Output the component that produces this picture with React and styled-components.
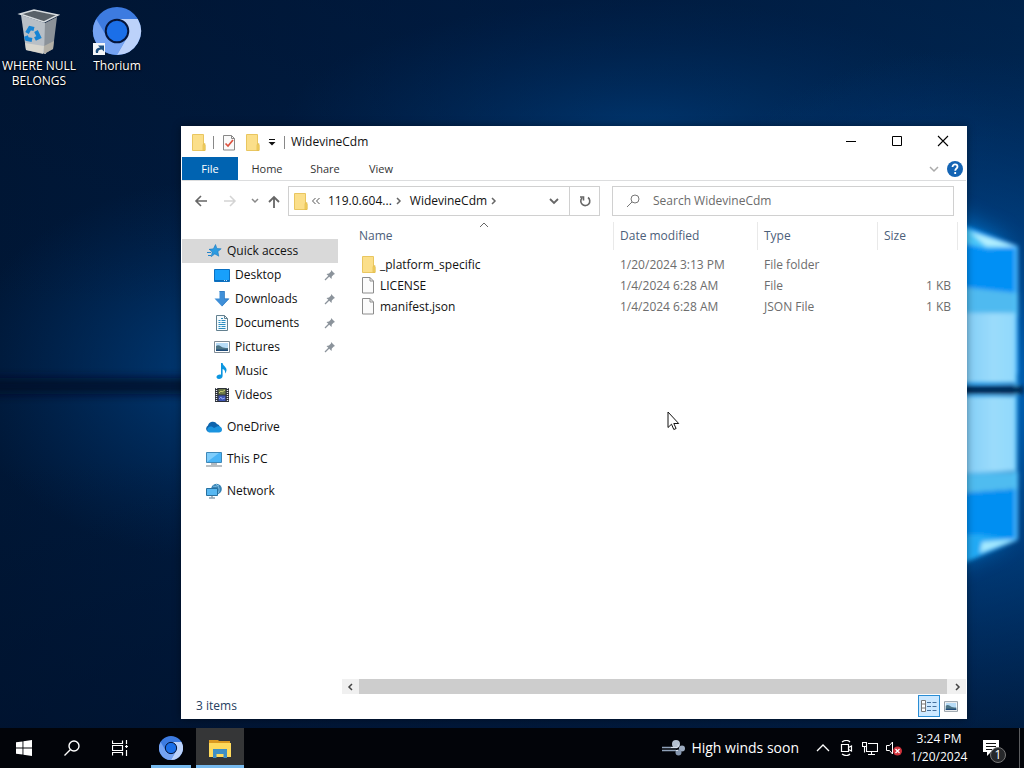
import React from "react";
import styled, { createGlobalStyle, css } from "styled-components";

const GlobalStyle = createGlobalStyle`
  * { box-sizing: border-box; }
  html, body { margin: 0; padding: 0; }
  body { font-family: "Open Sans", "Noto Sans", sans-serif; font-size: 12px; line-height: 16px; color: #111; background: #001a3a; overflow: hidden; }
  button, input { font: inherit; color: inherit; }
  svg { display: block; flex: none; }
  a { color: inherit; text-decoration: none; }
`;

const Desktop = styled.div`
  position: relative;
  height: 100vh;
  min-height: 480px;
  display: flex;
  flex-direction: column;
  overflow: hidden;
`;
const Wallpaper = styled.svg`
  position: absolute;
  inset: 0;
  width: 100%;
  height: 100%;
`;
const Shortcuts = styled.main`
  position: relative;
  flex: 1;
  min-height: 0;
  display: flex;
  align-items: flex-start;
  padding-top: 6px;
`;
const Shortcut = styled.a`
  width: 78px;
  display: flex;
  flex-direction: column;
  align-items: center;
  gap: 2px;
  color: #fff;
  line-height: 15px;
  text-align: center;
  text-shadow: 0 1px 2px #000, 0 0 2px #000;
`;

const Explorer = styled.section`
  position: absolute;
  left: 181px;
  right: 57px;
  top: 126px;
  bottom: 49px;
  display: flex;
  flex-direction: column;
  background: #fff;
  padding: 1px;
  box-shadow: 0 0 8px rgba(0, 0, 0, 0.4);
`;
const TitleBar = styled.header`
  height: 30px;
  display: flex;
  align-items: center;
`;
const QuickTools = styled.div`
  display: flex;
  align-items: center;
  gap: 7px;
  padding-left: 9px;
`;
const Bar = styled.span`
  width: 1px;
  height: 13px;
  background: #888;
`;
const Title = styled.h1`
  flex: 1;
  margin: 0 0 0 6px;
  font-size: 12px;
  font-weight: 400;
`;
const CaptionButton = styled.button`
  width: 46px;
  height: 30px;
  border: 0;
  padding: 0 0 2px;
  background: transparent;
  display: grid;
  place-items: center;
`;
const IconButton = styled.button`
  border: 0;
  padding: 0;
  background: transparent;
  display: grid;
  place-items: center;
  flex: none;
  width: ${(p) => p.$w || 16}px;
  height: ${(p) => p.$h || 16}px;
`;
const Ribbon = styled.nav`
  height: 24px;
  display: flex;
  align-items: center;
  border-bottom: 1px solid #dcddde;
  font-size: 11px;
  padding-right: 3px;
`;
const Tab = styled.button`
  height: 23px;
  border: 0;
  padding: 0;
  width: ${(p) => p.$w}px;
  background: ${(p) => (p.$primary ? "#0063b1" : "transparent")};
  color: ${(p) => (p.$primary ? "#fff" : "#333")};
`;
const Spacer = styled.span`
  flex: 1;
`;
const AddressRow = styled.div`
  display: grid;
  grid-template-columns: 96px 312fr 354fr;
  align-items: center;
  padding: 5px 12px 5px 10px;
`;
const NavButtons = styled.div`
  display: flex;
  align-items: center;
`;
const AddressBox = styled.div`
  min-width: 0;
  height: 30px;
  border: 1px solid #d0d0d0;
  display: flex;
  align-items: center;
`;
const Crumb = styled.button`
  border: 0;
  padding: 0 3px 0 7px;
  background: transparent;
  white-space: nowrap;
`;
const Refresh = styled(IconButton)`
  border-left: 1px solid #d0d0d0;
`;
const SearchBox = styled.label`
  min-width: 0;
  margin-left: 12px;
  height: 30px;
  border: 1px solid #d0d0d0;
  display: flex;
  align-items: center;
  gap: 13px;
  padding-left: 13px;
`;
const SearchInput = styled.input`
  flex: 1;
  min-width: 0;
  border: 0;
  padding: 0;
  outline: 0;
  background: transparent;
  &::placeholder { color: #6b6b6b; opacity: 1; }
`;
const Body = styled.div`
  flex: 1;
  min-height: 0;
  display: flex;
`;
const Sidebar = styled.nav`
  width: 156px;
  margin-right: 4px;
  padding-top: 18px;
  display: flex;
  flex-direction: column;
  gap: 8px;
`;
const Group = styled.div`
  display: flex;
  flex-direction: column;
`;
const NavItem = styled.a`
  height: 24px;
  display: flex;
  align-items: center;
  gap: 5px;
  padding-left: ${(p) => (p.$child ? 32 : 24)}px;
  padding-right: 2px;
  ${(p) => p.$selected && css`background: #d9d9d9;`}
`;
const Content = styled.div`
  flex: 1;
  min-width: 0;
  display: flex;
  flex-direction: column;
`;
const TableArea = styled.div`
  flex: 1;
  min-height: 0;
  padding: 1px 8px 0 10px;
`;
const FileTable = styled.table`
  width: 100%;
  table-layout: fixed;
  border-collapse: separate;
  border-spacing: 0;
`;
const Head = styled.th`
  width: ${(p) => (p.$w ? p.$w + "px" : "auto")};
  height: 28px;
  padding: 0 0 0 ${(p) => (p.$first ? 7 : 6)}px;
  border-right: 1px solid #e9e9e9;
  font-weight: 400;
  text-align: left;
  color: #4c607a;
`;
const HeadInner = styled.span`
  position: relative;
  display: block;
`;
const SortMark = styled.svg`
  position: absolute;
  top: -6px;
  left: 120px;
`;
const Cell = styled.td`
  height: 21px;
  padding: 0 7px 0 6px;
  color: #6d6d6d;
  text-align: ${(p) => (p.$right ? "right" : "left")};
`;
const GapRow = styled.tr`
  height: 4px;
`;
const FileLink = styled.a`
  display: flex;
  align-items: center;
  gap: 4px;
  padding-left: 3px;
  color: #111;
`;
const ScrollBar = styled.div`
  height: 15px;
  display: flex;
  align-items: center;
  background: #f0f0f0;
`;
const Thumb = styled.div`
  flex: 1;
  height: 15px;
  background: #cdcdcd;
`;
const StatusBar = styled.footer`
  height: 24px;
  display: flex;
  align-items: center;
  padding: 0 4px 0 14px;
  color: #26405f;
`;
const ViewButton = styled.button`
  width: 22px;
  height: 22px;
  padding: 0;
  display: grid;
  place-items: center;
  border: 1px solid ${(p) => (p.$on ? "#2a8dd4" : "transparent")};
  background: ${(p) => (p.$on ? "#cce8ff" : "transparent")};
`;

const Taskbar = styled.footer`
  position: relative;
  height: 40px;
  flex: none;
  display: flex;
  align-items: center;
  background: #020409;
  color: #fff;
`;
const TaskButton = styled.button`
  width: 48px;
  height: 40px;
  border: 0;
  padding: 0;
  background: transparent;
  display: grid;
  place-items: center;
`;
const AppButton = styled.button`
  width: ${(p) => (p.$active ? 48 : 40)}px;
  height: 40px;
  margin-left: ${(p) => (p.$active ? 5 : 7)}px;
  border: 0;
  border-top: 3px solid transparent;
  border-bottom: 3px solid #76b9ed;
  padding: 0;
  background: ${(p) => (p.$active ? "#353637" : "transparent")};
  display: grid;
  place-items: center;
`;
const Weather = styled.button`
  display: flex;
  align-items: center;
  gap: 5px;
  border: 0;
  padding: 0;
  margin-right: 17px;
  background: transparent;
  font-size: 14px;
  line-height: 20px;
  white-space: nowrap;
`;
const Tray = styled.div`
  display: flex;
  align-items: center;
  gap: 8px;
`;
const Clock = styled.time`
  width: 58px;
  display: flex;
  flex-direction: column;
  text-align: center;
  line-height: 18px;
`;
const Notices = styled.button`
  position: relative;
  border: 0;
  padding: 0;
  width: 32px;
  height: 40px;
  margin: 0 8px 0 11px;
  background: transparent;
`;
const NoticeIcon = styled.svg`
  position: absolute;
  left: 4px;
  top: 12px;
`;
const Badge = styled.span`
  position: absolute;
  left: 11px;
  top: 19px;
  width: 16px;
  height: 16px;
  border-radius: 50%;
  border: 1px solid #777;
  background: #26282b;
  font-size: 12px;
  line-height: 14px;
  text-align: center;
`;
const ShowDesktop = styled.span`
  width: 5px;
  height: 40px;
  border-left: 1px solid #5b5d60;
`;
const Pointer = styled.svg`
  position: absolute;
  left: 667px;
  top: 411px;
  pointer-events: none;
`;

const Stroke = ({ w = 16, h = 16, d, c = "#555", s = 1.5 }) => (
  <svg width={w} height={h} viewBox={`0 0 ${w} ${h}`} fill="none" stroke={c} strokeWidth={s}><path d={d} /></svg>
);
const Folder = () => (
  <svg width="15" height="17" viewBox="0 0 15 17">
    <path d="M1.5 .5h11v10l1.5.6v5.4H1.500z" fill="#fbdf8a" stroke="#e9c660" />
    <path d="M12 10.500 14 9.500v7h-2z" fill="#f1cf62" stroke="#e3bb4c" strokeWidth=".7" />
  </svg>
);
const Page = () => (
  <svg width="15" height="17" viewBox="0 0 15 17">
    <path d="M1.500 .5h7.500l3.500 3.500v12h-11z" fill="#fbfbfb" stroke="#8c8c8c" />
    <path d="M9 .5v3.500h3.500" fill="none" stroke="#8c8c8c" />
  </svg>
);
const CheckPage = () => (
  <svg width="14" height="17" viewBox="0 0 14 17">
    <path d="M1.500 1.500h8l3 3v11.500h-11z" fill="#fafafa" stroke="#888" />
    <path d="M9.500 1.500v3h3" fill="none" stroke="#888" />
    <path d="m3.500 9.500 2.500 2.500 5-6" fill="none" stroke="#dc5240" strokeWidth="1.700" />
  </svg>
);
const Pin = () => (
  <svg width="12" height="12" viewBox="0 0 12 12">
    <path d="M7 1l4 4-1.200.4-2 2-.3 2.600L2.500 5l2.500-.4 2-2z" fill="#8b939b" />
    <path d="M5 7 1 11" stroke="#8b939b" strokeWidth="1.300" />
  </svg>
);
const Star = () => (
  <svg width="16" height="16" viewBox="0 0 16 16">
    <path d="m9.500 1.500 1.400 4 4.300.3-3.300 2.800.9 4.600-4-2.300-3.600 2.800 1-4.600-3-2.800 4.200-.5z" fill="#2d9be0" stroke="#1c7cc2" strokeWidth=".6" />
    <path d="M1 9.500h4M2 12.500h3M3 6.500h2" stroke="#2484c9" />
  </svg>
);
const DesktopIcon = () => (
  <svg width="16" height="13" viewBox="0 0 16 13"><path d="M.5.500h15v12H.5z" fill="#18a0fb" stroke="#0a70c2" /><path d="M1 11.500h14" stroke="#0c6bb5" /><path d="M10 11.500h4" stroke="#b9e0ff" strokeDasharray="1 1" /></svg>
);
const Download = () => (
  <svg width="16" height="16" viewBox="0 0 16 16"><path d="M5.500 0h5v7.500h5L8 15.500.500 7.500h5z" fill="#3f8fd8" /><path d="M5.500.500h5v7.500h4L8 15" fill="none" stroke="#2d77be" strokeWidth=".7" /></svg>
);
const DocIcon = () => (
  <svg width="16" height="16" viewBox="0 0 16 16"><path d="M2.500.500h8l3 3v12h-11z" fill="#f4fafd" stroke="#63808f" /><path d="M10.500.500v3h3" fill="none" stroke="#63808f" /><path d="M7 3.500h2M4.500 5.500h2m1 0h4M4.500 7.500h2m1 0h4M4.500 9.500h7M4.500 11.500h2m1 0h4M4.500 13.500h7" stroke="#2c8dc0" /></svg>
);
const Picture = ({ w = 16, h = 12 }) => (
  <svg width={w} height={h} viewBox="0 0 16 12"><path d="M.5.500h15v11H.5z" fill="#fff" stroke="#7f8c96" /><path d="M2 2h12v8H2z" fill="#b7dcf7" /><path d="M2 5c3-2 5 1 7 1.500S13 7 14 7v3H2z" fill="#4d7586" /><path d="M2 8.500h12V10H2z" fill="#1e4a78" /></svg>
);
const Music = () => (
  <svg width="16" height="16" viewBox="0 0 16 16"><path d="M7 0h1.600c.3 3 4.400 4 3.900 7.500-.2 1.300-.8 2.200-1.500 3 .6-3-1-4-2.400-4.500v7c0 1.800-1.800 3-3.600 3-1.500 0-2.500-.8-2.500-2 0-1.600 2.200-2.800 4.500-2.300z" fill="#0c96e0" /></svg>
);
const Video = () => (
  <svg width="16" height="16" viewBox="0 0 16 16"><path d="M1 1h14v14H1z" fill="#2c3038" /><path d="M2.500 1v14M13.500 1v14" stroke="#e9ecf2" strokeWidth="1.400" strokeDasharray="1 1" /><path d="M4.500 2h7v5.500h-7z" fill="#6c7a48" /><path d="M4.500 8.500h7V14h-7z" fill="#3e55b5" /><path d="m5 6 2-2 1 1 3-2" stroke="#c6cb75" fill="none" /><path d="m5 12 2-2 1 2 3-1" stroke="#8fa3ee" fill="none" /></svg>
);
const Cloud = () => (
  <svg width="16" height="16" viewBox="0 0 16 16"><path d="M1.500 12.500A3.500 3.500 0 0 1 2 6.600 5 5 0 0 1 11 5a4.500 4.500 0 0 1 3 3z" fill="#0d64ad" /><path d="M3 13.500A3 3 0 0 1 3 8c2-1 4 0 5 1l3-1.500c3-.8 5 .7 5 3s-1.500 3-3 3z" fill="#1b94df" /></svg>
);
const Pc = () => (
  <svg width="16" height="16" viewBox="0 0 16 16"><path d="M.5 1.500h15v10H.5z" fill="#4ab4f6" stroke="#3f88b8" /><path d="M1 11V2h12z" fill="#7fcdfb" /><path d="M5 13h6" stroke="#6b7780" /><path d="M0 15h16" stroke="#8b959c" strokeWidth="1.200" /></svg>
);
const NetworkIcon = () => (
  <svg width="16" height="16" viewBox="0 0 16 16"><circle cx="10.500" cy="6" r="5.300" fill="#3782b4" /><path d="M7 3c2 1 4 0 6-1M10 1c4 3 4 8 1 10" stroke="#8cc6e6" fill="none" strokeWidth=".9" /><path d="M.5 5.500h11v7H.5z" fill="#58b8f2" stroke="#27709f" /><path d="M3 15h6M6 12.500v2" stroke="#54758c" /></svg>
);
const ChromiumArt = () => (
  <>
    <circle cx="24" cy="24" r="24" fill="#3d7be0" />
    <path d="M3.200 12a24 24 0 0 0 20.800 36L34 30 24 24 14 30z" fill="#75a3f2" />
    <path d="M24 12h20.800A24 24 0 0 1 24 48l10.400-18z" fill="#bcd2fa" />
    <circle cx="24" cy="24" r="11.300" fill="#1b6fe8" stroke="#05153a" strokeWidth="2" />
  </>
);
const Chromium = () => (
  <svg width="24" height="24" viewBox="0 0 48 48"><ChromiumArt /></svg>
);
const ThoriumIcon = () => (
  <svg width="50" height="50" viewBox="-1 -1 50 50">
    <ChromiumArt />
    <path d="M0 36h12v12H0z" fill="#f4f6f8" />
    <path d="M3 46c-1-4 1-5 4-5.500L5 38.500h6v6L9 42.500c-3 0-4 1-4 3.500z" fill="#1c4f80" />
  </svg>
);
const Bin = () => (
  <svg width="48" height="50" viewBox="0 0 48 50">
    <path d="m6 9 5 35 20 4 2-30z" fill="#b8bfc6" />
    <path d="m30 17 12-6-4 32-9 5z" fill="#8b9299" />
    <path d="M5 8 19 4l24 5-14 7z" fill="#596168" stroke="#d8dde0" strokeWidth="1.500" />
    <path d="m10 37 19 3-1 8-17-4z" fill="#ddd9cf" opacity=".85" />
    <path d="m29 40 10-5-1 8-9 5z" fill="#b9b4a8" opacity=".85" />
    <g fill="none" stroke="#1684d4" strokeWidth="4"><path d="m12 27 3-5 4 1" /><path d="m21 25 3 6-4 2" /><path d="m17 34-5-1-1-3" /></g>
  </svg>
);

const quick = [
  ["Desktop", DesktopIcon, true],
  ["Downloads", Download, true],
  ["Documents", DocIcon, true],
  ["Pictures", Picture, true],
  ["Music", Music, false],
  ["Videos", Video, false],
];
const roots = [["OneDrive", Cloud], ["This PC", Pc], ["Network", NetworkIcon]];
const files = [
  ["_platform_specific", "1/20/2024 3:13 PM", "File folder", "", Folder],
  ["LICENSE", "1/4/2024 6:28 AM", "File", "1 KB", Page],
  ["manifest.json", "1/4/2024 6:28 AM", "JSON File", "1 KB", Page],
];

const Background = () => (
  <Wallpaper viewBox="0 0 1024 768" preserveAspectRatio="xMaxYMid slice" aria-hidden="true">
    <defs>
      <linearGradient id="base" x1="0" x2="1" y1="0" y2="0">
        <stop offset="0" stopColor="#001736" /><stop offset=".5" stopColor="#00204a" /><stop offset="1" stopColor="#002c5c" />
      </linearGradient>
      <radialGradient id="halo" gradientUnits="userSpaceOnUse" cx="960" cy="390" r="340">
        <stop offset="0" stopColor="#0078d8" /><stop offset=".35" stopColor="#00509c" stopOpacity=".7" /><stop offset="1" stopColor="#003a80" stopOpacity="0" />
      </radialGradient>
      <radialGradient id="beam"><stop offset="0" stopColor="#004a92" stopOpacity=".7" /><stop offset="1" stopColor="#003a78" stopOpacity="0" /></radialGradient>
      <linearGradient id="shade" x1="0" x2="0" y1="0" y2="1"><stop offset="0" stopColor="#00102a" stopOpacity=".35" /><stop offset=".4" stopColor="#00102a" stopOpacity="0" /><stop offset=".6" stopColor="#00102a" stopOpacity="0" /><stop offset="1" stopColor="#00102a" stopOpacity=".6" /></linearGradient>
      <linearGradient id="pane" x1="0" x2="1" y1="0" y2="0"><stop offset=".5" stopColor="#7dcaf6" /><stop offset=".8" stopColor="#9bdcfb" /><stop offset="1" stopColor="#8fd8fd" /></linearGradient>
      <filter id="soft" x="-30%" y="-30%" width="160%" height="160%"><feGaussianBlur stdDeviation="2" /></filter>
      <filter id="band" x="-30%" y="-200%" width="160%" height="500%"><feGaussianBlur stdDeviation="5" /></filter>
      <filter id="wide" x="-60%" y="-60%" width="220%" height="220%"><feGaussianBlur stdDeviation="12" /></filter>
    </defs>
    <path d="M0 0h1024v768H0z" fill="url(#base)" />
    <ellipse cx="640" cy="130" rx="360" ry="130" fill="url(#beam)" />
    <ellipse cx="220" cy="370" rx="260" ry="190" fill="url(#beam)" />
    <path d="M0 0h1024v768H0z" fill="url(#shade)" />
    <circle cx="960" cy="390" r="340" fill="url(#halo)" />
    <path d="M-20 378h240v16H-20z" fill="#000d27" opacity=".8" filter="url(#band)" />
    <path d="M900 190 1004 240v300L900 590z" fill="#0089ea" opacity=".7" filter="url(#wide)" />
    <g filter="url(#soft)">
      <path d="m900 200 118 46v128H900z" fill="#0090f5" />
      <path d="m900 205 118 42-30 2-88-20z" fill="#4cc8fa" />
      <path d="m970 232 48 15-32-1z" fill="#b4f0ff" />
      <path d="m900 280 118 13v24l-118-3z" fill="#4fbaf0" />
      <path d="M900 313h117v70H900z" fill="url(#pane)" />
      <path d="M900 396h117v75l-117 6z" fill="url(#pane)" />
      <path d="m900 476 118-4v17l-118 9z" fill="#4fbcf0" />
      <path d="m900 498 118-9v50l-118 46z" fill="#008ff2" />
      <path d="m900 590 118-50-40-6-78 6z" fill="#22aaf5" />
      <path d="m980 553 38-14-36 3z" fill="#a5eaff" />
      <path d="M1016 247v292" stroke="#54c8ff" strokeWidth="2" />
      <path d="M880 390h144" stroke="#002a55" strokeWidth="8" />
    </g>
  </Wallpaper>
);

export default function App() {
  return (
    <>
      <GlobalStyle />
      <Desktop>
        <Background />
        <Shortcuts>
          <Shortcut href="#bin"><Bin />WHERE NULL BELONGS</Shortcut>
          <Shortcut href="#thorium"><ThoriumIcon />Thorium</Shortcut>
        </Shortcuts>
        <Explorer aria-label="WidevineCdm">
          <TitleBar>
            <QuickTools>
              <Folder /><Bar />
              <IconButton aria-label="Properties"><CheckPage /></IconButton>
              <IconButton aria-label="New folder"><Folder /></IconButton>
              <IconButton $w="10" aria-label="Customize toolbar">
                <svg width="8" height="8" viewBox="0 0 8 8"><path d="M1 1.500h6" stroke="#111" /><path d="M.5 4h7L4 7.500z" fill="#111" /></svg>
              </IconButton>
              <Bar />
            </QuickTools>
            <Title>WidevineCdm</Title>
            <CaptionButton aria-label="Minimize"><Stroke w={12} h={12} d="M1 6.500h10" c="#000" s={1} /></CaptionButton>
            <CaptionButton aria-label="Maximize"><Stroke w={12} h={12} d="M1.500 1.500h9v9h-9z" c="#000" s={1} /></CaptionButton>
            <CaptionButton aria-label="Close"><Stroke w={12} h={12} d="m1 1 10 10M11 1 1 11" c="#000" s={1.1} /></CaptionButton>
          </TitleBar>
          <Ribbon aria-label="Ribbon">
            <Tab $w={56} $primary>File</Tab><Tab $w={58}>Home</Tab><Tab $w={58}>Share</Tab><Tab $w={54}>View</Tab>
            <Spacer />
            <IconButton $w="26" aria-label="Expand ribbon"><Stroke w={10} h={8} d="m1 2 4 4 4-4" c="#aaa" /></IconButton>
            <IconButton aria-label="Help">
              <svg width="16" height="16" viewBox="0 0 16 16"><circle cx="8" cy="8" r="8" fill="#1464b4" /><path d="M5.500 6c0-3.500 5-3.200 5-.3 0 1.800-2.300 1.900-2.300 4M8.200 11v2" fill="none" stroke="#fff" strokeWidth="1.800" /></svg>
            </IconButton>
          </Ribbon>
          <AddressRow>
            <NavButtons>
              <IconButton $w="18" aria-label="Back"><Stroke w={14} h={12} d="M13 6H2m5-5L2 6l5 5" c="#666" s={1.600} /></IconButton>
              <IconButton $w="40" aria-label="Forward"><Stroke w={14} h={12} d="M1 6h11M7 1l5 5-5 5" c="#d4d4d4" /></IconButton>
              <IconButton $w="10" aria-label="Recent locations"><Stroke w={8} h={6} d="m1 1 3 3 3-3" c="#888" /></IconButton>
              <IconButton $w="28" aria-label="Up"><Stroke w={12} h={13} d="M6 13V2M1 7l5-5 5 5" c="#666" s={1.800} /></IconButton>
            </NavButtons>
            <AddressBox>
              <IconButton $w="22" $h="20" aria-label="Location"><Folder /></IconButton>
              <Stroke w={10} h={8} d="M4.500 1l-3 3 3 3M8.500 1l-3 3 3 3" c="#555" s={1} />
              <Crumb>119.0.604...</Crumb>
              <Stroke w={8} h={8} d="m2 1 3 3-3 3" c="#666" />
              <Crumb>WidevineCdm</Crumb>
              <Stroke w={8} h={8} d="m2 1 3 3-3 3" c="#666" />
              <Spacer />
              <IconButton $w="30" aria-label="Previous locations"><Stroke w={10} h={8} d="m1 2 4 4 4-4" c="#666" s={1.800} /></IconButton>
              <Refresh $w="30" $h="28" aria-label="Refresh">
                <Stroke w={12} h={12} d="M9 2.500A4.500 4.500 0 1 1 3 3M1 2h3.500v3.500" c="#666" s={1.600} />
              </Refresh>
            </AddressBox>
            <SearchBox>
              <Stroke w={14} h={14} d="M6 8 1 13M13 5a4 4 0 1 1-8 0 4 4 0 0 1 8 0z" c="#777" s={1} />
              <SearchInput type="text" aria-label="Search WidevineCdm" placeholder="Search WidevineCdm" />
            </SearchBox>
          </AddressRow>
          <Body>
            <Sidebar aria-label="Folders">
              <Group>
                <NavItem href="#quick" $selected><Star />Quick access</NavItem>
                {quick.map(([name, Icon, pinned]) => (
                  <NavItem href={"#" + name} key={name} $child><Icon />{name}<Spacer />{pinned && <Pin />}</NavItem>
                ))}
              </Group>
              {roots.map(([name, Icon]) => (
                <NavItem href={"#" + name} key={name}><Icon />{name}</NavItem>
              ))}
            </Sidebar>
            <Content>
              <TableArea>
                <FileTable>
                  <thead>
                    <tr>
                      <Head $first><HeadInner>Name<SortMark width="10" height="6" viewBox="0 0 10 6" fill="none" stroke="#666"><path d="m1 5 4-4 4 4" /></SortMark></HeadInner></Head>
                      <Head $w={144}>Date modified</Head><Head $w={120}>Type</Head><Head $w={80}>Size</Head>
                    </tr>
                  </thead>
                  <tbody>
                    <GapRow />
                    {files.map(([name, date, type, size, Icon]) => (
                      <tr key={name}>
                        <Cell><FileLink href={"#" + name}><Icon />{name}</FileLink></Cell>
                        <Cell>{date}</Cell><Cell>{type}</Cell><Cell $right>{size}</Cell>
                      </tr>
                    ))}
                  </tbody>
                </FileTable>
              </TableArea>
              <ScrollBar>
                <IconButton $w="17" aria-label="Scroll left"><Stroke w={8} h={8} d="M5 1 2 4l3 3" c="#444" /></IconButton>
                <Thumb />
                <IconButton $w="19" aria-label="Scroll right"><Stroke w={8} h={8} d="m3 1 3 3-3 3" c="#444" /></IconButton>
              </ScrollBar>
            </Content>
          </Body>
          <StatusBar>
            3 items<Spacer />
            <ViewButton $on aria-label="Details view">
              <svg width="18" height="14" viewBox="0 0 18 14" fill="none"><path d="M1.500 1.500h4v11h-4zM1.500 5h4M1.500 9h4" stroke="#777" fill="#fff" /><path d="M7 3.500h4m1.500 0h4M7 7.500h4m1.500 0h4M7 11.500h4m1.500 0h4" stroke="#46709c" /></svg>
            </ViewButton>
            <ViewButton aria-label="Large icons view"><Picture w={14} h={11} /></ViewButton>
          </StatusBar>
        </Explorer>
        <Taskbar>
          <TaskButton aria-label="Start">
            <svg width="16" height="16" viewBox="0 0 16 16" fill="#fff"><path d="M0 2.300 6.500 1.400v6.200H0zM7.400 1.200 16 0v7.600H7.400zM0 8.400h6.500v6.200L0 13.700zM7.400 8.400H16V16l-8.600-1.200z" /></svg>
          </TaskButton>
          <TaskButton aria-label="Search"><Stroke d="M6.500 9.500.500 15.500M15 6a5 5 0 1 1-10 0 5 5 0 0 1 10 0z" c="#fff" s={1.400} /></TaskButton>
          <TaskButton aria-label="Task view"><Stroke d="M.5.500v3h10v-3M.500 15.500v-3h10v3M.500 5.500h10v5H.500zM14.500 0v4M14.500 5v3M14.500 10v6M13 6.500h3" c="#fff" s={1.200} /></TaskButton>
          <AppButton aria-label="Thorium"><Chromium /></AppButton>
          <AppButton aria-label="File Explorer" $active>
            <svg width="22" height="19" viewBox="0 0 22 19"><path d="M0 1h9l1 1h11v4H0z" fill="#dc9a20" /><path d="M0 4h22v14H0z" fill="#ffda5c" /><path d="M4 10h14v9h-3.500v-4h-7v4H4z" fill="#3e8fc4" /></svg>
          </AppButton>
          <Spacer />
          <Weather>
            <svg width="24" height="18" viewBox="0 0 24 18" fill="none" strokeWidth="1.600">
              <path d="M0 8.500h15M0 11.500h14" stroke="#8fa1b8" />
              <circle cx="14" cy="5" r="4" fill="#b4c0d0" />
              <circle cx="20" cy="9.500" r="3" fill="#9dacc0" />
              <circle cx="16.500" cy="13.500" r="3" fill="#8596ae" />
              <path d="M9 8.500h6a2 2 0 0 0 1-3M14 11.500h2" stroke="#dbe3ee" strokeWidth="1" />
            </svg>
            High winds soon
          </Weather>
          <Tray>
            <IconButton $w="14" aria-label="Show hidden icons"><Stroke w={14} h={8} d="m1 7 6-6 6 6" c="#fff" s={1.300} /></IconButton>
            <IconButton aria-label="Meet now"><Stroke d="M3.500 4.500h7v7h-7zM10.500 7.500l3-1.500v5l-3-1.500M4 2c3-2 6-2 8 0M4 14c3 2 6 2 8 0" c="#fff" s={1.200} /></IconButton>
            <IconButton aria-label="Network status"><Stroke d="M6 3.500h9.500v8H4.500V7M.500 2.500h4v4h-4zM2.500 6.500v6M9.500 11.500v3M6 14.500h7" c="#fff" s={1.100} /></IconButton>
            <IconButton aria-label="Muted">
              <svg width="16" height="16" viewBox="0 0 16 16" fill="none"><path d="M.500 5.500h3l3-3.500v12l-3-3.500h-3z" stroke="#fff" /><circle cx="11.500" cy="11" r="4.500" fill="#d0323c" /><path d="m9.500 9 4 4m0-4-4 4" stroke="#fff" strokeWidth="1.200" /></svg>
            </IconButton>
            <Clock><span>3:24 PM</span><span>1/20/2024</span></Clock>
          </Tray>
          <Notices aria-label="Notifications">
            <NoticeIcon width="17" height="17" viewBox="0 0 17 17"><path d="M0 0h16v12H8l-4 4v-4H0z" fill="#fff" /><path d="M3 3.500h10M3 6.500h10M3 9.500h6" stroke="#111" /></NoticeIcon>
            <Badge>1</Badge>
          </Notices>
          <ShowDesktop />
        </Taskbar>
        <Pointer width="13" height="20" viewBox="0 0 13 20" aria-hidden="true">
          <path d="M1 1v15.500l3.500-3.300 2.300 5.300 2.300-1-2.300-5h4.900z" fill="#fff" stroke="#111" />
        </Pointer>
      </Desktop>
    </>
  );
}
